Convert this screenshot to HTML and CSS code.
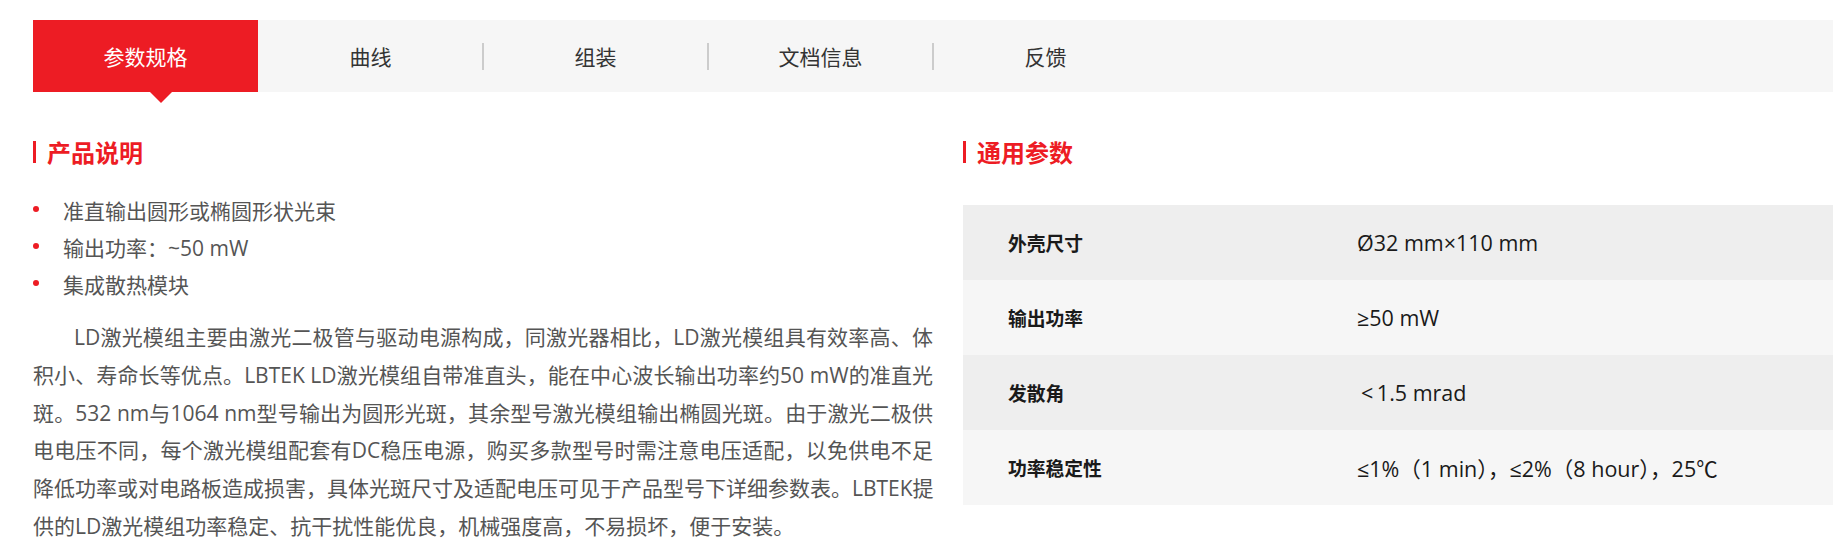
FILE: index.html
```html
<!DOCTYPE html>
<html lang="zh-CN">
<head>
<meta charset="utf-8">
<title>LD激光模组 - 参数规格</title>
<link rel="stylesheet" href="styles.css">
</head>
<body>
<div class="page">
  <nav class="tabs">
    <a class="tab active">参数规格</a>
    <a class="tab">曲线</a>
    <a class="tab sep">组装</a>
    <a class="tab sep">文档信息</a>
    <a class="tab sep">反馈</a>
  </nav>

  <div class="content">
    <section class="col-left">
      <h2 class="heading">产品说明</h2>
      <ul class="features">
        <li>准直输出圆形或椭圆形状光束</li>
        <li>输出功率：~50 mW</li>
        <li>集成散热模块</li>
      </ul>
      <p class="desc">
        <span class="line first">LD激光模组主要由激光二极管与驱动电源构成，同激光器相比，LD激光模组具有效率高、体</span>
        <span class="line">积小、寿命长等优点。LBTEK LD激光模组自带准直头，能在中心波长输出功率约50 mW的准直光</span>
        <span class="line">斑。532 nm与1064 nm型号输出为圆形光斑，其余型号激光模组输出椭圆光斑。由于激光二极供</span>
        <span class="line">电电压不同，每个激光模组配套有DC稳压电源，购买多款型号时需注意电压适配，以免供电不足</span>
        <span class="line">降低功率或对电路板造成损害，具体光斑尺寸及适配电压可见于产品型号下详细参数表。LBTEK提</span>
        <span class="line">供的LD激光模组功率稳定、抗干扰性能优良，机械强度高，不易损坏，便于安装。</span>
      </p>
    </section>

    <section class="col-right">
      <h2 class="heading">通用参数</h2>
      <div class="spec">
        <div class="row"><div class="label">外壳尺寸</div><div class="value">Ø32 mm×110 mm</div></div>
        <div class="row"><div class="label">输出功率</div><div class="value">≥50 mW</div></div>
        <div class="row"><div class="label">发散角</div><div class="value lt">&lt;&#8201;1.5 mrad</div></div>
        <div class="row"><div class="label">功率稳定性</div><div class="value">≤1%（1 min），≤2%（8 hour），25℃</div></div>
      </div>
    </section>
  </div>
</div>
</body>
</html>
```

FILE: styles.css
```css
* { box-sizing: border-box; }

html, body {
  margin: 0;
  padding: 0;
  background: #ffffff;
}

body {
  font-family: "Open Sans", "Noto Sans CJK SC", sans-serif;
  color: #555555;
}

.page {
  padding: 20px 10px 0 33px;
}

/* ---------- tabs ---------- */
.tabs {
  display: flex;
  height: 72px;
  background: #f6f6f6;
}

.tab {
  position: relative;
  width: 225px;
  display: flex;
  align-items: center;
  justify-content: center;
  font-size: 21px;
  color: #333333;
  text-decoration: none;
  cursor: pointer;
}

.tab.sep::before {
  content: "";
  position: absolute;
  left: -1px;
  top: 23px;
  width: 2px;
  height: 27px;
  background: #cccccc;
}

.tab.active {
  background: #ed1c24;
  color: #ffffff;
}

.tab.active::after {
  content: "";
  position: absolute;
  left: 117px;
  top: 100%;
  width: 0;
  height: 0;
  border-left: 11px solid transparent;
  border-right: 11px solid transparent;
  border-top: 11px solid #ed1c24;
}

/* ---------- content ---------- */
.content {
  display: grid;
  grid-template-columns: 900px 870px;
  column-gap: 30px;
  margin-top: 49px;
}

.heading {
  margin: 0;
  height: 22px;
  line-height: 22px;
  border-left: 3px solid #ed1c24;
  padding-left: 11px;
  font-family: "Noto Sans CJK SC", sans-serif;
  font-size: 24px;
  font-weight: bold;
  color: #ed1c24;
}

.features {
  list-style: none;
  margin: 28px 0 0;
  padding: 0;
}

.features li {
  display: flex;
  align-items: center;
  height: 37px;
  font-size: 21px;
  color: #555555;
}

.features li::before {
  content: "";
  flex: 0 0 6px;
  width: 6px;
  height: 6px;
  margin: -2px 24px 0 0;
  border-radius: 50%;
  background: #ed1c24;
}

.desc {
  margin: 17px 0 0;
  font-size: 21px;
  line-height: 37.8px;
  color: #555555;
}

.desc .line {
  display: block;
  text-align: justify;
  text-align-last: justify;
  white-space: nowrap;
}

.desc .line.first {
  padding-left: 41px;
}

.desc .line:last-child {
  text-align-last: auto;
}

/* ---------- spec table ---------- */
.spec {
  margin-top: 42px;
}

.row {
  display: grid;
  grid-template-columns: 394px 1fr;
  align-items: center;
  height: 75px;
  background: #eeeeee;
  color: #1a1a1a;
}

.row:nth-child(even) {
  background: #f6f6f6;
}

.label {
  padding-left: 45px;
  font-family: "Noto Sans CJK SC", sans-serif;
  font-size: 18.8px;
  font-weight: bold;
}

.value {
  font-size: 21.5px;
  font-weight: normal;
}

.value.lt {
  padding-left: 4px;
}
```
